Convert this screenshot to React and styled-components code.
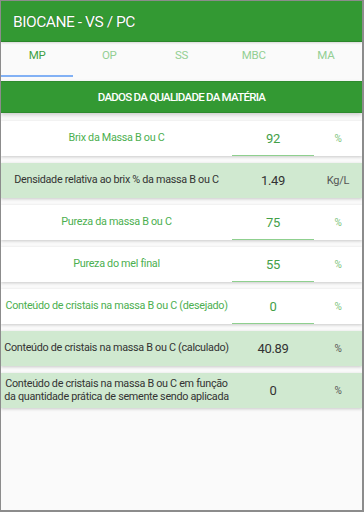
import React from "react";
import styled, { createGlobalStyle } from "styled-components";

const Global = createGlobalStyle`
  html, body { margin: 0; padding: 0; background: #fafafa; }
  * { box-sizing: border-box; }
  body { font-family: Roboto, "Noto Sans", Arial, sans-serif; }
`;

const Frame = styled.div`
  width: 364px;
  height: 512px;
  border: 1px solid #8c8c8c;
  border-right-width: 2px;
  border-bottom-width: 2px;
  background: #fafafa;
  overflow: hidden;
  display: flex;
  flex-direction: column;
`;

const AppBar = styled.header`
  height: 41px;
  flex: none;
  background: #339933;
  border-bottom: 1px solid #2b862b;
  display: flex;
  align-items: center;
  padding: 1px 0 0 12px;
  box-shadow: 0 1px 2px rgba(0, 0, 0, 0.15);
  position: relative;
  z-index: 2;
`;

const Title = styled.h1`
  margin: 0;
  font-size: 15.5px;
  font-weight: 400;
  color: #fff;
  letter-spacing: -0.45px;
  text-shadow: 0 0 1px rgba(0, 0, 0, 0.45);
`;

const Tabs = styled.nav`
  height: 39px;
  flex: none;
  display: grid;
  grid-template-columns: repeat(5, 1fr);
  background: #fafafa;
`;

const Tab = styled.div`
  display: flex;
  align-items: center;
  justify-content: center;
  padding-bottom: 8px;
  font-size: 11.5px;
  letter-spacing: -0.3px;
  color: ${(p) => (p.$active ? "#3f9f44" : "#93cf93")};
  border-bottom: 2px solid ${(p) => (p.$active ? "#82b1f5" : "transparent")};
  margin-bottom: 4px;
`;

const Section = styled.div`
  height: 32px;
  flex: none;
  background: #339933;
  border-top: 1px solid #2e8b2e;
  border-bottom: 1px solid #2e8b2e;
  display: flex;
  align-items: center;
  justify-content: center;
  color: #fff;
  font-size: 11.5px;
  font-weight: 500;
  letter-spacing: -0.75px;
  text-transform: uppercase;
  box-shadow: 0 2px 4px rgba(0, 0, 0, 0.18);
`;

const List = styled.div`
  display: flex;
  flex-direction: column;
  gap: 7px;
  padding-top: 8px;
`;

const Row = styled.div`
  height: 35px;
  flex: none;
  display: grid;
  grid-template-columns: 231px 82px 1fr;
  background: ${(p) => (p.$calc ? "#d0e9d0" : "#ffffff")};
  box-shadow: 0 1px 3px rgba(0, 0, 0, 0.2);
`;

const Label = styled.div`
  display: flex;
  align-items: center;
  justify-content: center;
  text-align: center;
  padding: 0 1px;
  font-size: 10.8px;
  letter-spacing: -0.3px;
  line-height: 12.5px;
  color: ${(p) => (p.$calc ? "#333" : "#4caf50")};
`;

const Value = styled.div`
  display: flex;
  align-items: center;
  justify-content: center;
  font-size: 13px;
  letter-spacing: -0.3px;
  color: ${(p) => (p.$calc ? "#333" : "#43a047")};
  border-bottom: 1px solid ${(p) => (p.$calc ? "transparent" : "#8fd08f")};
`;

const Unit = styled.div`
  display: flex;
  align-items: center;
  justify-content: center;
  font-size: ${(p) => (p.$small ? "10px" : "11px")};
  letter-spacing: -0.2px;
  color: ${(p) => (p.$calc ? "#555" : "#7dc47d")};
`;

const rows = [
  { label: "Brix da Massa B ou C", value: "92", unit: "%" },
  { label: "Densidade relativa ao brix % da massa B ou C", value: "1.49", unit: "Kg/L", calc: true },
  { label: "Pureza da massa B ou C", value: "75", unit: "%" },
  { label: "Pureza do mel final", value: "55", unit: "%" },
  { label: "Conteúdo de cristais na massa B ou C (desejado)", value: "0", unit: "%" },
  { label: "Conteúdo de cristais na massa B ou C (calculado)", value: "40.89", unit: "%", calc: true },
  {
    label: "Conteúdo de cristais na massa B ou C em função da quantidade prática de semente sendo aplicada",
    value: "0",
    unit: "%",
    calc: true,
  },
];

const tabs = ["MP", "OP", "SS", "MBC", "MA"];

export default function App() {
  return (
    <>
      <Global />
      <Frame>
        <AppBar>
          <Title>BIOCANE - VS / PC</Title>
        </AppBar>
        <Tabs>
          {tabs.map((t, i) => (
            <Tab key={t} $active={i === 0}>
              {t}
            </Tab>
          ))}
        </Tabs>
        <Section>Dados da qualidade da matéria</Section>
        <List>
          {rows.map((r, i) => (
            <Row key={i} $calc={r.calc}>
              <Label $calc={r.calc}>{r.label}</Label>
              <Value $calc={r.calc}>{r.value}</Value>
              <Unit $calc={r.calc} $small={r.unit === "%"}>
                {r.unit}
              </Unit>
            </Row>
          ))}
        </List>
      </Frame>
    </>
  );
}
